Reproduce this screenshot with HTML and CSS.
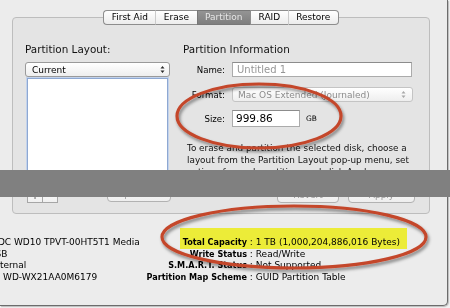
FILE: index.html
```html
<!DOCTYPE html>
<html>
<head>
<meta charset="utf-8">
<title>Disk Utility – Partition</title>
<link rel="stylesheet" href="styles.css">
</head>
<body>
<div class="screen">
  <div class="window">
    <div class="tabview">
      <div class="tabs">
        <div class="tab">First Aid</div>
        <div class="tab">Erase</div>
        <div class="tab sel">Partition</div>
        <div class="tab">RAID</div>
        <div class="tab">Restore</div>
      </div>
      <div class="box">
        <div class="col left">
          <div class="heading">Partition Layout:</div>
          <div class="popup">
            <span>Current</span>
            <svg class="arr" width="5" height="9" viewBox="0 0 5 9"><path d="M0.5 3.6 2.5 0.9 4.5 3.6Z M0.5 5.4 2.5 8.1 4.5 5.4Z"/></svg>
          </div>
          <div class="list"></div>
          <div class="lbottom">
            <div class="pm"><span class="pmb">+</span><span class="pmb">−</span></div>
            <div class="btn opt">Options…</div>
          </div>
        </div>
        <div class="col right">
          <div class="heading">Partition Information</div>
          <div class="form">
            <div class="frow r1"><span class="lbl">Name:</span><div class="field name">Untitled 1</div></div>
            <div class="frow r2"><span class="lbl">Format:</span>
              <div class="popup dis">
                <span>Mac OS Extended (Journaled)</span>
                <svg class="arr" width="5" height="9" viewBox="0 0 5 9"><path d="M0.5 3.6 2.5 0.9 4.5 3.6Z M0.5 5.4 2.5 8.1 4.5 5.4Z"/></svg>
              </div>
            </div>
            <div class="frow r3"><span class="lbl">Size:</span><div class="field size">999.86</div><span class="unit">GB</span></div>
          </div>
          <p class="help">To erase and partition the selected disk, choose a<br>layout from the Partition Layout pop-up menu, set<br>options for each partition, and click Apply.</p>
          <div class="rbuttons">
            <div class="btn revert">Revert</div>
            <div class="btn apply">Apply</div>
          </div>
        </div>
      </div>
    </div>
    <div class="info">
      <div class="ivals">
        <div>WDC WD10 TPVT-00HT5T1 Media</div>
        <div>USB</div>
        <div>External</div>
        <div class="serial">WD-WX21AA0M6179</div>
      </div>
      <div class="igrid">
        <div class="irow"><b>Total Capacity</b><span class="sep"> : </span><span>1 TB (1,000,204,886,016 Bytes)</span></div>
        <div class="irow"><b>Write Status</b><span class="sep"> : </span><span>Read/Write</span></div>
        <div class="irow"><b>S.M.A.R.T. Status</b><span class="sep"> : </span><span>Not Supported</span></div>
        <div class="irow"><b>Partition Map Scheme</b><span class="sep"> : </span><span>GUID Partition Table</span></div>
      </div>
    </div>
  </div>
  <div class="highlight"></div>
  <div class="redact"></div>
  <svg class="marks" width="450" height="308" viewBox="0 0 450 308">
    <defs>
      <filter id="sh" x="-20%" y="-30%" width="140%" height="170%">
        <feDropShadow dx="1.5" dy="2.5" stdDeviation="1.4" flood-color="#000" flood-opacity="0.45"/>
      </filter>
    </defs>
    <ellipse cx="259" cy="116" rx="82" ry="32" fill="none" stroke="#c4462c" stroke-width="3.2" filter="url(#sh)"/>
    <ellipse cx="294" cy="237" rx="132" ry="31" fill="none" stroke="#c4462c" stroke-width="3.2" filter="url(#sh)"/>
  </svg>
</div>
</body>
</html>
```

FILE: styles.css
```css
* { box-sizing: border-box; }
html, body { margin: 0; padding: 0; }
body {
  width: 450px;
  height: 308px;
  overflow: hidden;
  background: #f1f1f1;
  font-family: "DejaVu Sans", "Noto Sans", sans-serif;
  font-size: 9px;
  color: #000;
}
.screen { position: relative; width: 450px; height: 308px; overflow: hidden; }

.window {
  width: 448px;
  height: 306px;
  background: #ececec;
  border-right: 1px solid #6c6c6c;
  border-bottom: 1px solid #6c6c6c;
  border-bottom-right-radius: 5px;
  box-shadow: 1px 1px 1px rgba(0,0,0,.22);
  padding-top: 10px;
}

/* tab view */
.tabview { margin-left: 12px; width: 418px; }
.tabs {
  position: relative;
  z-index: 1;
  display: flex;
  justify-content: center;
  height: 15px;
  margin-bottom: -8px;
}
.tab {
  height: 15px;
  padding: 0 7.5px;
  line-height: 13px;
  border-top: 1px solid #8d8d8d;
  border-bottom: 1px solid #8d8d8d;
  border-left: 1px solid #cbcbcb;
  background: linear-gradient(#ffffff, #ececec);
  color: #000;
  white-space: nowrap;
}
.tab:first-child { border-left-color: #8d8d8d; border-radius: 4px 0 0 4px; }
.tab:last-child { border-right: 1px solid #8d8d8d; border-radius: 0 4px 4px 0; }
.tab.sel {
  background: linear-gradient(#949494, #7e7e7e);
  color: #e6e6e6;
  border-color: #777;
}
.tab.sel + .tab { border-left-color: #8d8d8d; }

.box {
  height: 197px;
  border: 1px solid #bdbdbd;
  border-radius: 4px;
  background: #e4e4e4;
  display: flex;
  gap: 13px;
  padding: 25px 0 10px 12px;
}
.col { display: flex; flex-direction: column; }
.left { width: 145px; }
.right { width: 232px; }

.heading {
  font-size: 10.4px;
  line-height: 13px;
  height: 13px;
  white-space: nowrap;
  color: #111;
}

.popup {
  height: 15px;
  border: 1px solid #9a9a9a;
  border-radius: 3px;
  background: linear-gradient(#ffffff, #eeeeee);
  display: flex;
  align-items: center;
  justify-content: space-between;
  padding: 0 4px 0 6px;
  white-space: nowrap;
}
.arr { fill: #2a2a2a; display: block; }
.left .popup { margin-top: 6px; }
.popup.dis { width: 181px; border-color: #c4c4c4; color: #8c8c8c; padding: 0 6px 0 5px; }
.popup.dis .arr { fill: #a8a8a8; }

.list {
  flex: 1;
  margin: 1px 2px 0;
  background: #fff;
  border: 1px solid #8ea8d2;
  box-shadow: 0 0 0 1px #c3d3ec;
}
.lbottom {
  height: 14px;
  display: flex;
  justify-content: space-between;
  align-items: flex-end;
}
.pm { display: flex; margin-left: 2px; }
.pmb {
  width: 16px;
  height: 14px;
  border: 1px solid #a6a6a6;
  background: linear-gradient(#fdfdfd, #f0f0f0);
  text-align: center;
  line-height: 12px;
  color: #333;
}
.pmb + .pmb { border-left: none; width: 15px; }

.btn {
  height: 16px;
  border: 1px solid #b2b2b2;
  border-radius: 4px;
  background: linear-gradient(#fcfcfc, #eeeeee);
  color: #9c9c9c;
  text-align: center;
  line-height: 14px;
  white-space: nowrap;
}
.opt { width: 64px; margin-right: -1px; margin-bottom: 1px; }
.revert { width: 62px; }
.apply { width: 67px; }

.form { margin-top: 6px; }
.frow { display: flex; align-items: center; }
.r2 { margin-top: 10px; }
.r3 { margin-top: 8px; }
.lbl {
  width: 42px;
  margin-right: 7px;
  text-align: right;
  font-size: 8.6px;
  white-space: nowrap;
}
.field {
  height: 15px;
  width: 180px;
  background: #fff;
  border: 1px solid #ababab;
  border-top-color: #8c8c8c;
  padding-left: 4px;
  font-size: 10px;
  line-height: 13px;
  white-space: nowrap;
}
.field.name { color: #969696; }
.field.size { width: 68px; height: 17px; line-height: 15px; font-size: 10.5px; color: #000; padding-left: 3px; }
.unit { margin-left: 6px; font-size: 7.5px; color: #000; }

.help {
  margin: 15px 0 0;
  padding-left: 4px;
  font-size: 8.85px;
  line-height: 12px;
  white-space: nowrap;
  color: #111;
}
.rbuttons { margin-top: auto; display: flex; justify-content: flex-end; gap: 9px; }

/* info section */
.info { display: flex; padding-top: 23px; line-height: 11.7px; }
.ivals { margin-left: -11px; width: 156px; white-space: nowrap; flex: none; }
.ivals .serial { padding-left: 14px; }
.igrid { white-space: nowrap; }
.irow b {
  display: inline-block;
  width: 102px;
  text-align: right;
  font-size: 8.1px;
}
.sep { white-space: pre; }

/* annotations */
.highlight {
  position: absolute;
  left: 180px;
  top: 228px;
  width: 227px;
  height: 21px;
  background: #ffff3c;
  mix-blend-mode: multiply;
}
.redact {
  position: absolute;
  left: 0;
  top: 170px;
  width: 450px;
  height: 27px;
  background: #808080;
}
.marks { position: absolute; left: 0; top: 0; pointer-events: none; }
```
